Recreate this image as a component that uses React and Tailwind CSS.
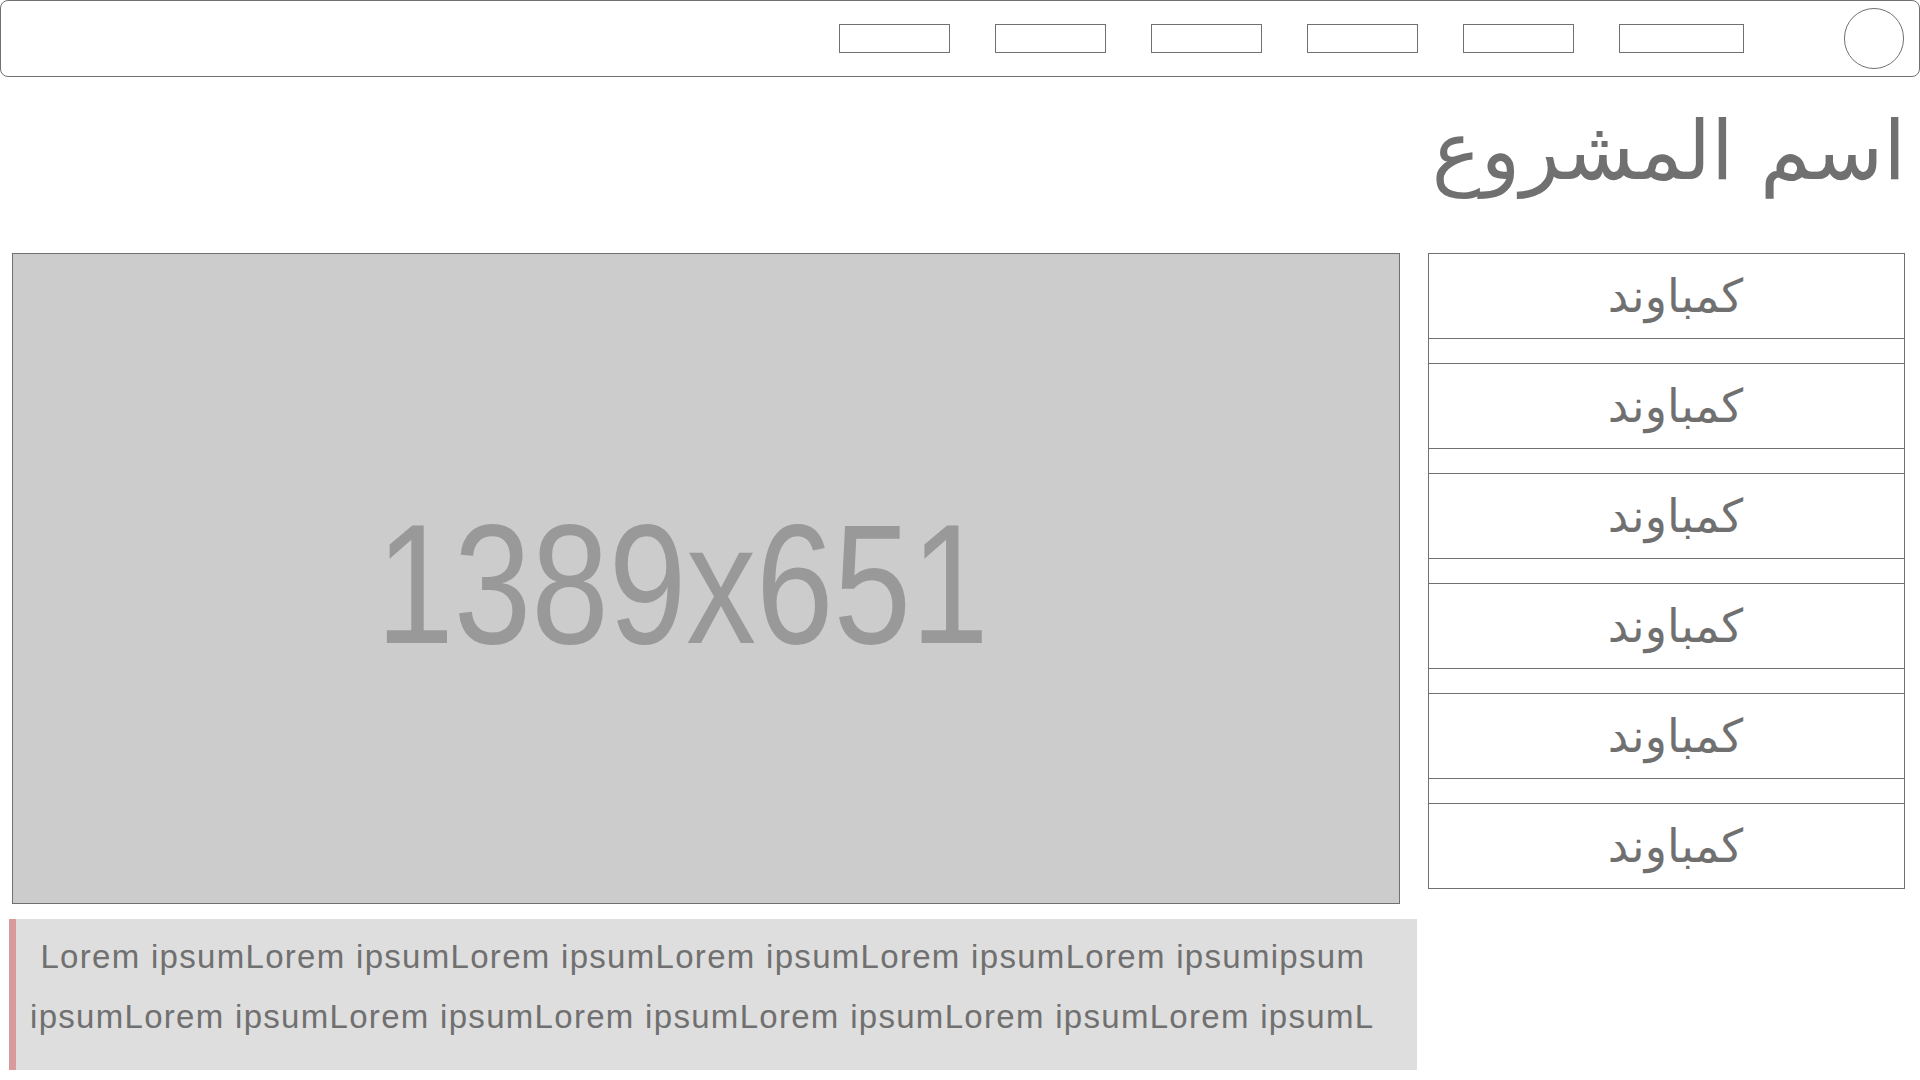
const navBoxes = ["w-[111px]", "w-[111px]", "w-[111px]", "w-[111px]", "w-[111px]", "w-[125px]"];
const items = Array.from({ length: 6 }, () => "كمباوند");

export default function App() {
    return (
        <div className="w-[1920px] h-[1080px] bg-white overflow-hidden" style={{ fontFamily: '"Liberation Sans", Arial, sans-serif' }}>
            {/* top bar */}
            <div className="h-[77px] border border-[#707070] rounded-[8px] flex flex-row items-center justify-end pr-[15px]">
                <div className="flex flex-row items-center gap-[45px]">
                    {navBoxes.map((w, i) => (
                        <div key={i} className={`${w} h-[29px] border border-[#707070]`} />
                    ))}
                </div>
                <div className="ml-[100px] w-[60px] h-[61px] rounded-full border border-[#707070]" />
            </div>

            {/* project name */}
            <div className="h-[176px] flex flex-row justify-end pr-[14px]">
                <h1 dir="rtl" className="mt-[33px] text-[82px] leading-none text-[#707070]" style={{ fontFamily: '"DejaVu Sans", sans-serif' }}>
                    اسم المشروع
                </h1>
            </div>

            <div className="flex flex-row items-start pl-[9px]">
                <div className="w-[1408px] flex flex-col">
                    <div className="ml-[3px] w-[1388px] h-[651px] bg-[#cccccc] border border-[#707070] flex items-center justify-center pr-[48px] pt-[10px]">
                        <span className="text-[170px] leading-none text-[#999999] scale-x-[0.82]">1389x651</span>
                    </div>
                    <div className="mt-[15px] h-[151px] bg-[#dedede] border-l-[7px] border-[#d99a9b] pl-[14px] pt-[8px] text-[33px] leading-[60px] tracking-[1.3px] text-[#707070] whitespace-pre">
                        <p>{" Lorem ipsumLorem ipsumLorem ipsumLorem ipsumLorem ipsumLorem ipsumipsum"}</p>
                        <p>ipsumLorem ipsumLorem ipsumLorem ipsumLorem ipsumLorem ipsumLorem ipsumL</p>
                    </div>
                </div>

                <div className="ml-[11px] w-[477px] border-x border-[#707070] flex flex-col">
                    {items.map((t, i) => (
                        <div key={i} className="flex flex-col">
                            {i > 0 && <div className="h-[24px]" />}
                            <div className="h-[86px] border-y border-[#707070] flex items-center justify-center pl-[18px]">
                                <span dir="rtl" className="text-[46px] leading-none text-[#707070]" style={{ fontFamily: '"DejaVu Sans", sans-serif' }}>{t}</span>
                            </div>
                        </div>
                    ))}
                </div>
            </div>
        </div>
    )
}
